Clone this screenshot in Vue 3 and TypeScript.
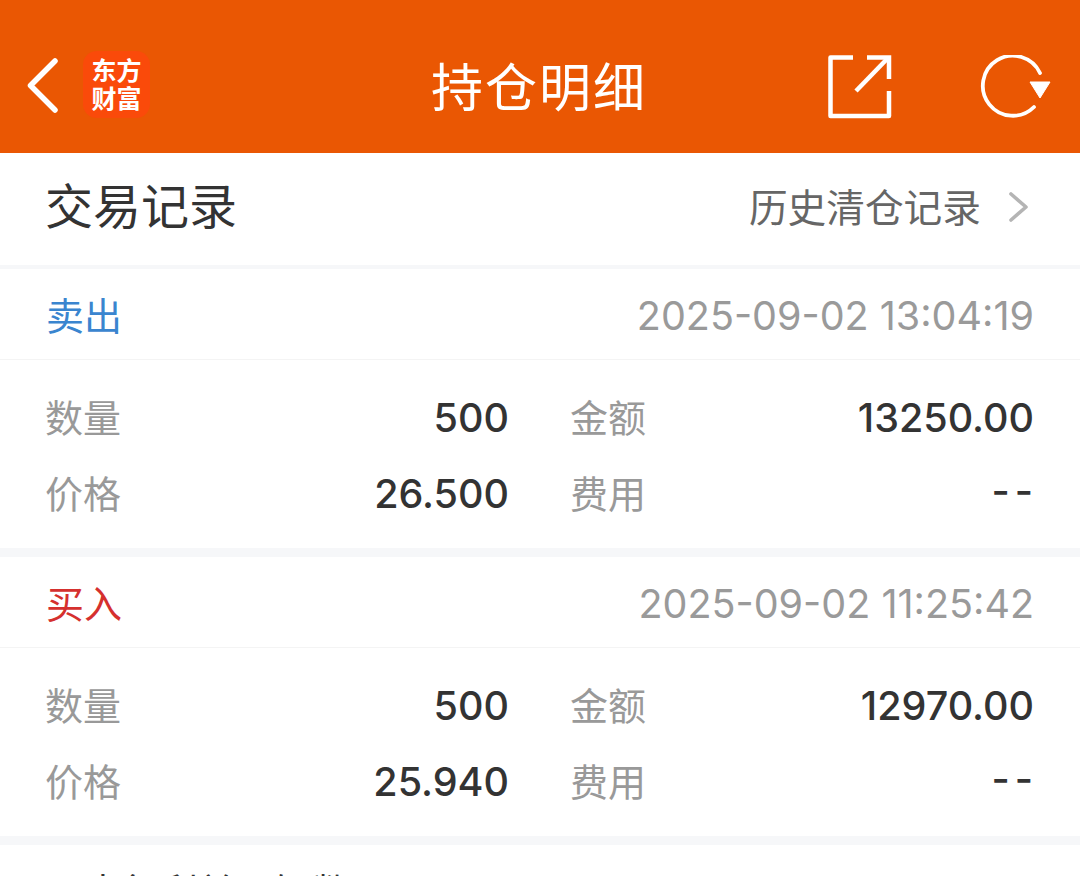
<script setup lang="ts">
interface Trade {
  side: string
  sideClass: string
  time: string
  qty: string
  amount: string
  price: string
  fee: string
}
const trades: Trade[] = [
  { side: '卖出', sideClass: 'sell', time: '2025-09-02 13:04:19', qty: '500', amount: '13250.00', price: '26.500', fee: '--' },
  { side: '买入', sideClass: 'buy', time: '2025-09-02 11:25:42', qty: '500', amount: '12970.00', price: '25.940', fee: '--' },
]
</script>

<template>
  <div class="page">
    <header class="bar">
      <div class="bar-left">
        <svg class="back" width="36" height="60" viewBox="0 0 36 60" fill="none">
          <path d="M29 6 L4.5 30.5 L29 55" stroke="#fff" stroke-width="5.5" stroke-linecap="round" stroke-linejoin="round" />
        </svg>
        <div class="logo"><span class="logo-text">东方财富</span></div>
      </div>
      <div class="title">持仓明细</div>
      <div class="bar-right">
        <svg width="64" height="64" viewBox="0 0 64 64" fill="none" stroke="#fff" stroke-width="4.5">
          <path d="M25 2.5 H2.5 V61 H61 V36" stroke-linejoin="round" />
          <path d="M28 36 L60 3" />
          <path d="M39 2.5 H61 V24" />
        </svg>
        <svg width="72" height="64" viewBox="0 0 72 64" fill="none">
          <path d="M54 52 A30 30 0 1 1 60 18" stroke="#fff" stroke-width="3.8" stroke-linecap="round" />
          <path d="M50 27 H70 L60 43 Z" fill="#fff" stroke="#fff" stroke-width="1" stroke-linejoin="round" />
        </svg>
      </div>
    </header>

    <section class="head-row">
      <div class="head-title">交易记录</div>
      <div class="head-link">
        <span>历史清仓记录</span>
        <svg width="22" height="32" viewBox="0 0 22 32" fill="none">
          <path d="M3 3 L18 16 L3 29" stroke="#b4b4b4" stroke-width="3.6" stroke-linecap="round" stroke-linejoin="round" />
        </svg>
      </div>
    </section>

    <section v-for="t in trades" :key="t.time" class="card">
      <div class="card-top">
        <span class="side" :class="t.sideClass">{{ t.side }}</span>
        <span class="time">{{ t.time }}</span>
      </div>
      <div class="grid">
        <span class="lab">数量</span><span class="val">{{ t.qty }}</span>
        <span class="lab">金额</span><span class="val">{{ t.amount }}</span>
        <span class="lab">价格</span><span class="val">{{ t.price }}</span>
        <span class="lab">费用</span><span class="val dash">{{ t.fee }}</span>
      </div>
    </section>

    <section class="foot">即中行利益用知数</section>
  </div>
</template>

<style>
html, body { margin: 0; background: #fff; overflow: hidden; }
</style>

<style scoped>
.page {
  width: 1080px;
  height: 876px;
  overflow: hidden;
  background: #f6f7f9;
  font-family: Inter, "Noto Sans CJK SC", sans-serif;
}
.bar {
  height: 153px;
  background: #ea5703;
  display: grid;
  grid-template-columns: 1fr auto 1fr;
  align-items: center;
  color: #fff;
  box-sizing: border-box;
  padding: 16px 28px 0 26px;
}
.bar-left { display: flex; align-items: center; gap: 21px; }
.logo {
  width: 67px;
  height: 67px;
  box-sizing: border-box;
  padding-bottom: 3px;
  border-radius: 14px;
  background: #fa4a0a;
  display: flex;
  align-items: center;
  justify-content: center;
  font-size: 25px;
  line-height: 28px;
  font-weight: 700;
  font-family: "Noto Sans CJK SC", sans-serif;
}
.logo-text { display: block; width: 50px; text-align: center; }
.title { font-size: 52px; line-height: 64px; letter-spacing: 2px; font-family: "Noto Sans CJK SC", sans-serif; }
.bar-right { display: flex; justify-content: flex-end; align-items: center; gap: 88px; padding-top: 4px; }
.head-row {
  height: 112px;
  background: #fff;
  display: flex;
  align-items: center;
  justify-content: space-between;
  padding: 0 50px 0 45px;
  margin-bottom: 4px;
}
.head-title { font-size: 48px; color: #333; margin-bottom: 12px; font-family: "Noto Sans CJK SC", sans-serif; }
.head-link { display: flex; align-items: center; gap: 27px; font-size: 38.7px; color: #666; padding-bottom: 5px; font-family: "Noto Sans CJK SC", sans-serif; }
.head-link span { margin-bottom: 3px; }
.card { background: #fff; margin-bottom: 9px; }
.card-top {
  height: 90px;
  display: flex;
  align-items: center;
  justify-content: space-between;
  padding: 0 46px;
  border-bottom: 1px solid #f4f4f4;
}
.side { font-size: 38px; margin-bottom: 2px; font-family: "Noto Sans CJK SC", sans-serif; }
.sell { color: #3a85cf; }
.buy { color: #d5302e; }
.time { font-size: 39.5px; color: #9a9a9a; margin-top: 4px; }
.grid {
  height: 188px;
  box-sizing: border-box;
  padding: 20px 46px 16px;
  display: grid;
  grid-template-columns: 80px 383px 80px 445px;
  grid-auto-rows: 76px;
  align-items: center;
}
.lab { font-size: 38px; color: #999; margin: 0 0 6px -1px; font-family: "Noto Sans CJK SC", sans-serif; white-space: nowrap; }
.val { font-size: 39.5px; font-weight: 500; color: #333; text-align: right; margin-bottom: 1px; }
.dash { letter-spacing: 5px; margin-right: -4px; margin-bottom: 7px; }
.grid .lab:nth-child(3) { padding-left: 62px; margin-right: -62px; }
.grid .lab:nth-child(7) { padding-left: 62px; margin-right: -62px; }
.foot { background: #fff; height: 31px; overflow: hidden; padding: 17px 46px 0; font-size: 38px; line-height: 56px; color: #333; font-family: "Noto Sans CJK SC", sans-serif; }
</style>
